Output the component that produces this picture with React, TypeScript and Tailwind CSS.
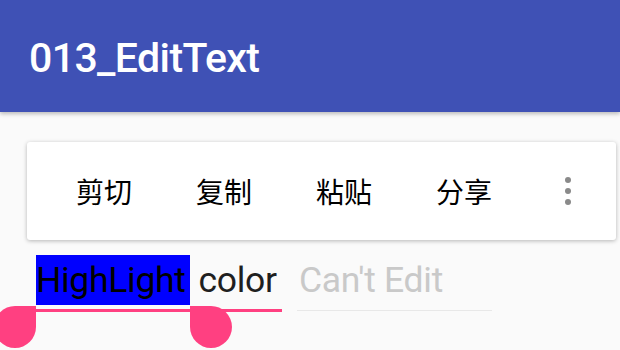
import React from 'react';

const menuItems = ['剪切', '复制', '粘贴', '分享'];

const App: React.FC = () => {
  return (
    <div className="w-[620px] h-[350px] overflow-hidden bg-[#fafafa] relative" style={{ fontFamily: 'Roboto, "Noto Sans CJK SC", sans-serif' }}>
      {/* app bar */}
      <div className="h-[112px] bg-[#3f51b5] flex items-center px-[29px] shadow-[0_2px_4px_rgba(0,0,0,0.25)] relative z-10">
        <h1 className="text-white text-[41px] font-medium tracking-[-0.6px] pt-[6px]">013_EditText</h1>
      </div>

      {/* floating text selection toolbar */}
      <div className="mt-[30px] ml-[27px] mr-[4px] h-[98px] bg-white rounded-[3px] shadow-[0_1px_4px_rgba(0,0,0,0.28)] flex items-center pl-[49px]">
        {menuItems.map((item) => (
          <span
            key={item}
            className="text-[28px] text-black w-[120px] leading-none"
            style={{ fontFamily: '"Noto Sans CJK SC", sans-serif' }}
          >
            {item}
          </span>
        ))}
        <div className="ml-[9px] flex flex-col gap-[5px]">
          <span className="w-[6px] h-[6px] rounded-full bg-[#8a8a8a]" />
          <span className="w-[6px] h-[6px] rounded-full bg-[#8a8a8a]" />
          <span className="w-[6px] h-[6px] rounded-full bg-[#8a8a8a]" />
        </div>
      </div>

      {/* edit texts */}
      <div className="flex items-start mt-[15px] ml-[36px]">
        <div className="relative w-[246px]">
          <div className="h-[50px] text-[35.5px] leading-[50px] text-[#1f1f1f] whitespace-nowrap tracking-[-0.3px]">
            <span className="bg-[#0000ff] text-black inline-block w-[154px]">HighLight</span> color
          </div>
          <div className="mt-[4px] h-[3px] bg-[#ff4081]" />
          {/* selection handles */}
          <div className="absolute left-[-42px] top-[51px] w-[42px] h-[42px] bg-[#ff4081] rounded-full rounded-tr-none" />
          <div className="absolute left-[154px] top-[51px] w-[42px] h-[42px] bg-[#ff4081] rounded-full rounded-tl-none" />
        </div>
        <div className="ml-[15px] w-[195px]">
          <div className="h-[50px] text-[35.5px] leading-[50px] text-[#c9c9c9] whitespace-nowrap pl-[2px] tracking-[-0.3px]">
            Can't Edit
          </div>
          <div className="mt-[5px] h-px bg-[#e8e8e8]" />
        </div>
      </div>
    </div>
  );
};

export default App;
